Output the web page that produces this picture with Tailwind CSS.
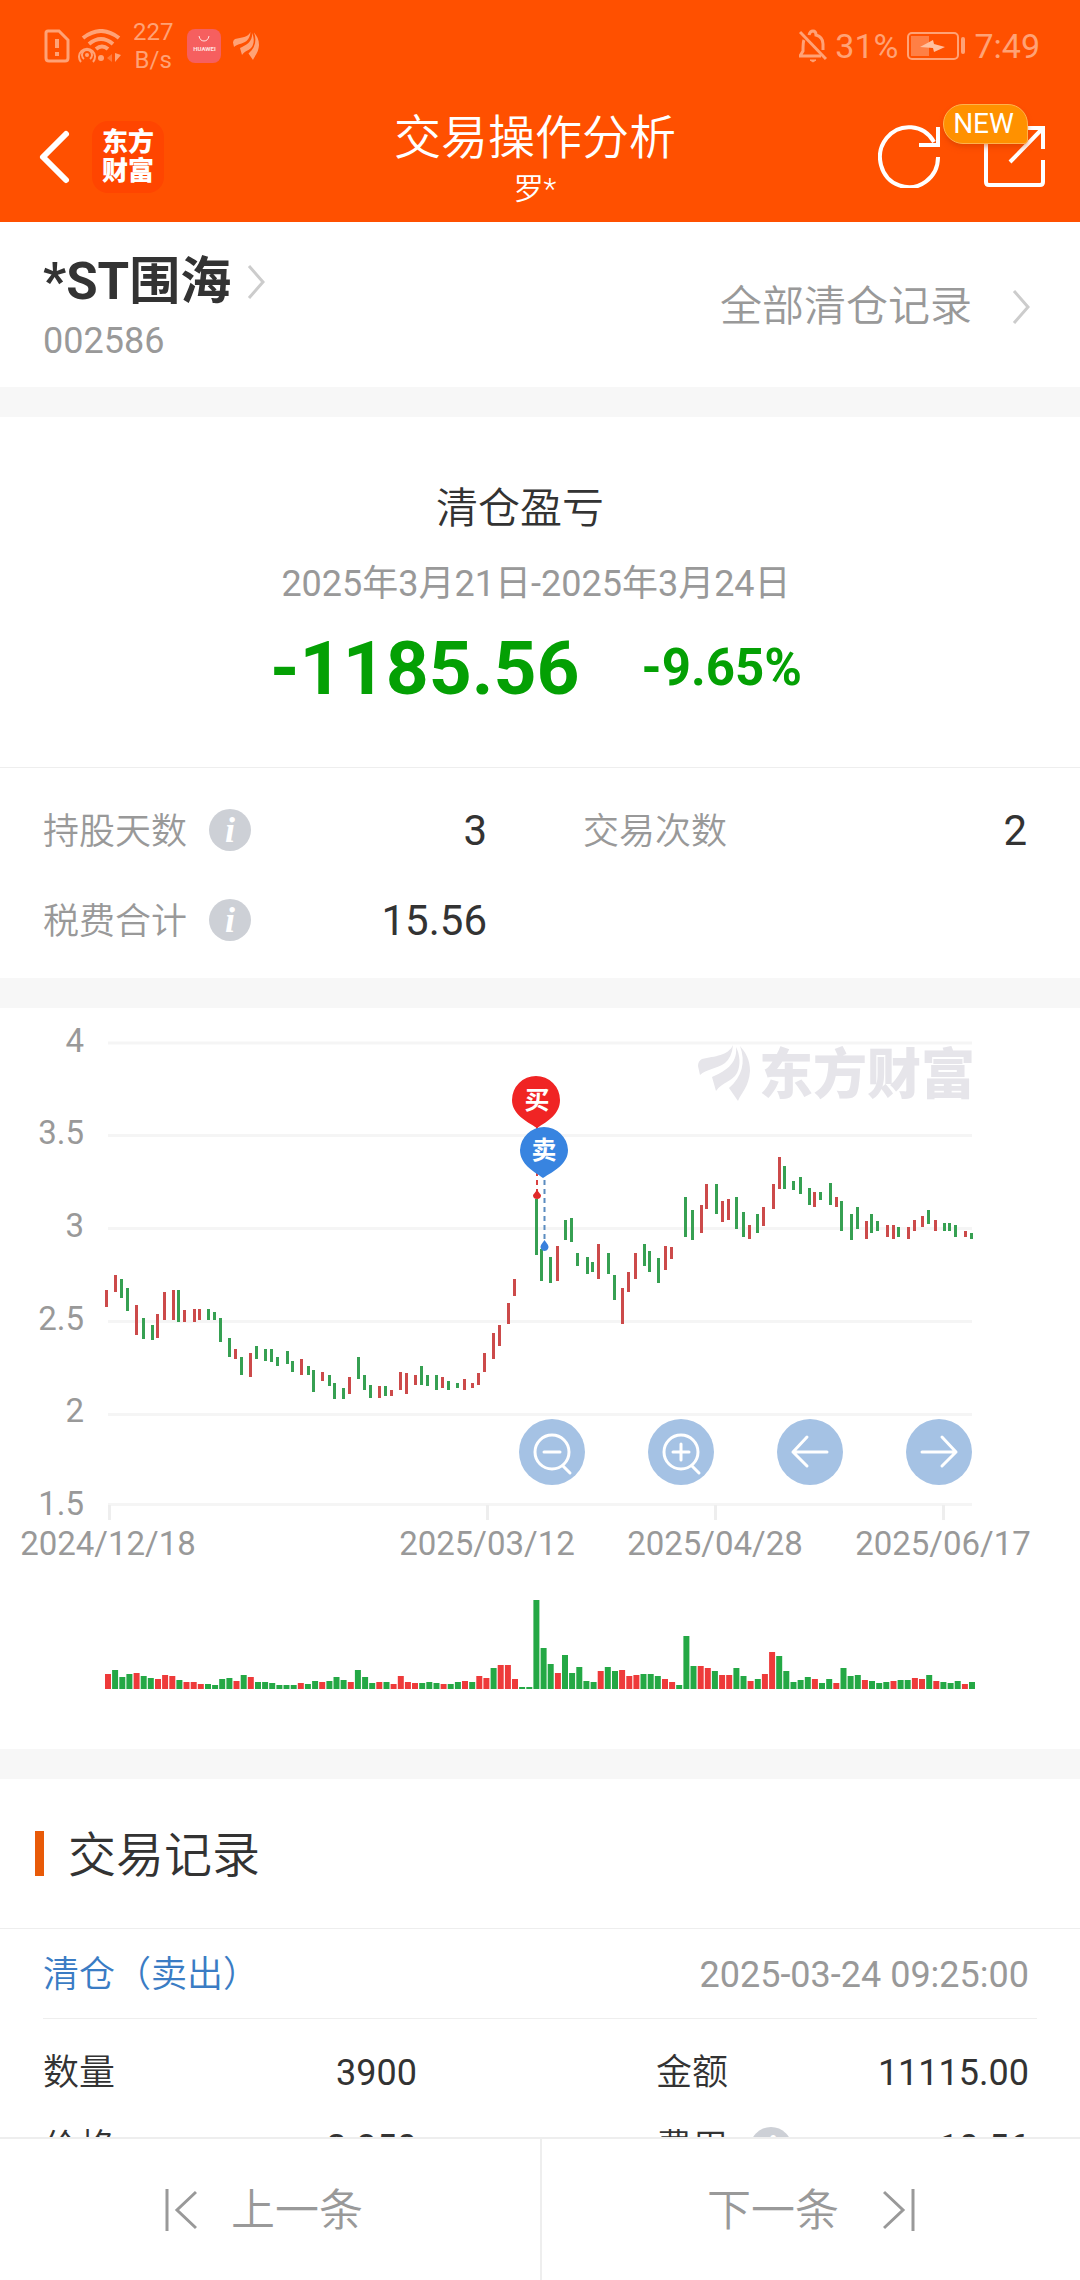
<!DOCTYPE html>
<html lang="zh-CN">
<head>
<meta charset="utf-8">
<meta name="viewport" content="width=device-width, initial-scale=1">
<title>交易操作分析</title>
<script src="https://cdn.jsdelivr.net/npm/@tailwindcss/browser@4"></script>
</head>
<body class="flex h-screen flex-col overflow-hidden bg-white font-[Roboto,'Noto_Sans_CJK_SC',sans-serif] text-[#333333]">

<svg class="hidden" aria-hidden="true">
  <symbol id="feather" viewBox="0 0 52 56">
    <path d="M35 0C30 11 17 11 4 14Q0 16 0 21L2 30C8 24 19 24 27 18Q34 12 35 0Z"/>
    <path d="M38 2C40 20 25 27 14 32L18 46C24 37 34 37 39 28C43 20 42 10 38 2Z"/>
    <path d="M42 1C48 17 44 32 31 43L40 56C43 48 51 42 52 26C52 15 48 8 42 1Z"/>
  </symbol>
  <symbol id="chevron" viewBox="0 0 18 34">
    <path d="M2 1L16 17L2 33" fill="none" stroke="currentColor" stroke-width="3"/>
  </symbol>
</svg>

<header class="shrink-0 bg-[#ff5000] text-white">
  <div class="flex h-[92px] items-center justify-between pr-10 pl-11 text-[34px] text-[#ffa276]">
    <div class="flex items-center">
      <svg class="mr-2 h-[34px] w-[26px]" viewBox="0 0 26 34" fill="none" stroke="currentColor" stroke-width="3">
        <path d="M4 2H15L24 11V29Q24 32 21 32H5Q2 32 2 29V4Q2 2 4 2Z"/>
        <path d="M13 10V19M13 23V27" stroke-width="4"/>
      </svg>
      <svg class="mr-3 h-[34px] w-[43px]" viewBox="0 0 43 34" fill="none" stroke="currentColor">
        <path d="M5 9Q23 -5 41 9M11 15Q23 5 35 15" stroke-width="4"/>
        <path d="M18 20Q24 15 30 20" stroke-width="4"/>
        <circle cx="23" cy="29" r="3" fill="currentColor" stroke="none"/>
        <circle cx="9" cy="26" r="2" fill="currentColor" stroke="none"/>
        <path d="M6 30A5 5 0 1 1 12 30M3 33A8 8 0 1 1 15 33" stroke-width="2"/>
        <path d="M34 25L29 29L34 33Z" fill="#ff7a3c" stroke="none"/>
        <path d="M37 24L43 26L37 33Z" fill="currentColor" stroke="none"/>
      </svg>
      <div class="mr-[14px] text-center text-[24px] leading-7">227<br>B/s</div>
      <div class="mr-3 flex h-[34px] w-[34px] flex-col items-center rounded-lg bg-[#f65f5f] text-[#ffe3e0]">
        <svg class="mt-[6px] h-[8px] w-[12px]" viewBox="0 0 12 8" fill="none" stroke="currentColor"><path d="M1 1Q2 6 6 6T11 1"/></svg>
        <span class="text-[6px] leading-3 font-bold">HUAWEI</span>
      </div>
      <svg class="h-7 w-[26px]" fill="currentColor"><use href="#feather"/></svg>
    </div>
    <div class="flex items-center">
      <svg class="mr-2 h-[34px] w-[28px]" viewBox="0 0 28 34" fill="none" stroke="currentColor" stroke-width="3">
        <path d="M1 3L27 30"/>
        <path d="M10 6Q11 2 14 2T17 6Q24 8 24 15V21M5 11Q4 13 4 22L1 27H22"/>
        <path d="M11 31H17L14 33Z" stroke-width="1" fill="currentColor"/>
      </svg>
      <span>31%</span>
      <svg class="mx-[9px] h-7 w-[58px]" viewBox="0 0 58 28" fill="none">
        <rect x="1" y="1" width="50" height="26" rx="4" stroke="currentColor" stroke-width="2"/>
        <rect x="4" y="4" width="18" height="20" fill="#ff7f45"/>
        <path d="M13 15L26 8L27 12L38 15L27 20L26 16Z" fill="#ffc0a0"/>
        <rect x="54" y="5" width="4" height="17" rx="2" fill="currentColor"/>
      </svg>
      <span>7:49</span>
    </div>
  </div>

  <div class="grid h-[130px] grid-cols-[1fr_auto_1fr] items-center pr-[34px] pl-6">
    <div class="flex items-center gap-5 pl-1">
      <button type="button" aria-label="返回">
        <svg class="h-14 w-11" viewBox="0 0 44 56" fill="none" stroke="#fff" stroke-width="6" stroke-linecap="round" stroke-linejoin="round"><path d="M38 5L15 28L38 51"/></svg>
      </button>
      <a href="#" class="flex h-[72px] w-[72px] items-center justify-center rounded-2xl bg-[#ff4500] text-[26px] leading-[29px] font-black">东方<br>财富</a>
    </div>
    <div class="text-center">
      <h1 class="text-[47px] leading-[64px] font-[350]">交易操作分析</h1>
      <p class="text-[30px] leading-[38px] font-[350]">罗*</p>
    </div>
    <div class="flex items-center justify-end gap-10 pb-[2px]">
      <button type="button" aria-label="刷新">
        <svg class="h-16 w-16" viewBox="0 0 64 64" fill="none" stroke="#fff" stroke-width="4"><path d="M60 33A29 30 0 1 1 56 18"/><path d="M60 3V21H41"/></svg>
      </button>
      <button type="button" aria-label="分享" class="relative">
        <svg class="h-16 w-16" viewBox="0 0 64 64" fill="none" stroke="#fff" stroke-width="4"><path d="M4 14V58Q4 61 7 61H58Q61 61 61 58V36"/><path d="M40 4H61V25M61 4L28 38"/></svg>
        <span class="absolute -top-5 right-[18px] flex h-10 w-[85px] items-center justify-center rounded-[20px] rounded-br-sm border border-[#ffb24d] bg-[#ff9100] pr-1 text-[28px] shadow-md shadow-[#c83c00]/40">NEW</span>
      </button>
    </div>
  </div>
</header>

<main class="min-h-0 flex-1 overflow-y-auto [scrollbar-width:none]">
  <section class="flex h-[165px] items-center justify-between pt-[4px] pr-[50px] pl-[43px]">
    <div>
      <a href="#" class="flex items-center gap-4 text-[51px] leading-[68px] font-bold">*ST围海
        <svg class="h-[34px] w-[18px] text-[#cccccc]"><use href="#chevron"/></svg>
      </a>
      <p class="text-[36px] leading-[50px] text-[#999999]">002586</p>
    </div>
    <a href="#" class="flex items-center gap-10 text-[42px] font-[350] text-[#999999]">全部清仓记录
      <svg class="h-[34px] w-[18px] text-[#cccccc]"><use href="#chevron"/></svg>
    </a>
  </section>

  <section class="border-t-[30px] border-[#f7f7f7] pt-[62px] pr-2 pb-[54px] text-center">
    <h2 class="pr-8 text-[42px] leading-[60px] font-[350]">清仓盈亏</h2>
    <p class="mt-5 text-[36px] leading-[50px] text-[#999999]">2025年3月21日-2025年3月24日</p>
    <div class="mt-[14px] flex items-center justify-center gap-[62px] font-bold text-[#04a004]">
      <span class="text-[75px] leading-[90px]">-1185.56</span>
      <span class="text-[51px] leading-[90px]">-9.65%</span>
    </div>
  </section>

  <dl class="grid grid-cols-2 border-t border-[#eeeeee] pt-[17px] pb-[13px] text-[36px]">
    <div class="flex h-[90px] items-center justify-between pr-[53px] pl-[43px]">
      <dt class="flex items-center gap-[22px] font-[350] text-[#999999]"><span class="pt-[3px]">持股天数</span>
        <button type="button" aria-label="持股天数说明" class="h-[42px] w-[42px] rounded-full bg-[#cdd0d6] font-['Liberation_Serif',serif] text-[36px] leading-[40px] font-bold text-white italic">i</button>
      </dt>
      <dd class="text-[42px]">3</dd>
    </div>
    <div class="flex h-[90px] items-center justify-between pr-[53px] pl-[43px]">
      <dt class="pt-[3px] font-[350] text-[#999999]">交易次数</dt>
      <dd class="text-[42px]">2</dd>
    </div>
    <div class="flex h-[90px] items-center justify-between pr-[53px] pl-[43px]">
      <dt class="flex items-center gap-[22px] font-[350] text-[#999999]"><span class="pt-[3px]">税费合计</span>
        <button type="button" aria-label="税费合计说明" class="h-[42px] w-[42px] rounded-full bg-[#cdd0d6] font-['Liberation_Serif',serif] text-[36px] leading-[40px] font-bold text-white italic">i</button>
      </dt>
      <dd class="text-[42px]">15.56</dd>
    </div>
  </dl>

  <section class="border-t-[30px] border-[#f7f7f7]">
    <div class="relative">
      <svg class="block w-full" viewBox="0 0 1080 741" role="img" aria-label="股价与成交量走势">
        <g id="grid" stroke="#f5f5f5" stroke-width="3">
          <path d="M108 35H972M108 127.500H972M108 220.500H972M108 313.500H972M108 406.500H972M108 496.500H972"/>
          <path stroke="#eeeeee" d="M109.500 497V512M487.500 497V512M715.500 497V512M943.500 497V512"/>
        </g>
        <g fill="#999999" font-size="33" text-anchor="end">
          <text x="84" y="44">4</text><text x="84" y="136">3.5</text><text x="84" y="229">3</text>
          <text x="84" y="322">2.5</text><text x="84" y="414">2</text><text x="84" y="507">1.5</text>
        </g>
        <g fill="#999999" font-size="33" text-anchor="middle">
          <text x="108" y="547">2024/12/18</text><text x="487" y="547">2025/03/12</text>
          <text x="715" y="547">2025/04/28</text><text x="943" y="547">2025/06/17</text>
        </g>
        <g fill="#e6e5ea">
          <use href="#feather" x="698" y="37" width="52" height="56"/>
          <text x="759" y="86" font-size="54" font-weight="900">东方财富</text>
        </g>
        <g id="candles"></g>
        <g id="volumes"></g>
        <g stroke-width="2" stroke-dasharray="5 4">
          <path d="M537 118V187" stroke="#d94040"/>
          <path d="M544.500 172V238" stroke="#5b8cc0"/>
        </g>
        <path d="M537 182L541 187A4 4 0 1 1 533 187Z" fill="#e02a2a"/>
        <path d="M544.500 232L548 237A4 4 0 1 1 541 237Z" fill="#3a80dc"/>
        <path d="M536 68A24 24 0 0 1 560 92C560 106 548 113 537 120C526 113 512 106 512 92A24 24 0 0 1 536 68Z" fill="#f02424"/>
        <path d="M544 119A24 24 0 0 1 568 142C568 156 554 163 543 170C533 163 520 156 520 142A24 24 0 0 1 544 119Z" fill="#3884e0"/>
        <g fill="#fff" font-size="25" font-weight="700" text-anchor="middle">
          <text x="537" y="101">买</text><text x="544" y="151">卖</text>
        </g>
      </svg>
      <div class="absolute top-[411px] right-[10%] flex gap-[63px]">
        <button type="button" aria-label="缩小" class="h-[66px] w-[66px] rounded-full bg-[#a5c2e4]">
          <svg viewBox="0 0 66 66" fill="none" stroke="#fff" stroke-width="3" stroke-linecap="round"><circle cx="33" cy="33" r="17"/><path d="M25 33H41M44 47L51 54"/></svg>
        </button>
        <button type="button" aria-label="放大" class="h-[66px] w-[66px] rounded-full bg-[#a5c2e4]">
          <svg viewBox="0 0 66 66" fill="none" stroke="#fff" stroke-width="3" stroke-linecap="round"><circle cx="33" cy="33" r="17"/><path d="M25 33H41M33 25V41M44 47L51 54"/></svg>
        </button>
        <button type="button" aria-label="左移" class="h-[66px] w-[66px] rounded-full bg-[#a5c2e4]">
          <svg viewBox="0 0 66 66" fill="none" stroke="#fff" stroke-width="3" stroke-linecap="round" stroke-linejoin="round"><path d="M50 33H16M30 18L16 33L30 47"/></svg>
        </button>
        <button type="button" aria-label="右移" class="h-[66px] w-[66px] rounded-full bg-[#a5c2e4]">
          <svg viewBox="0 0 66 66" fill="none" stroke="#fff" stroke-width="3" stroke-linecap="round" stroke-linejoin="round"><path d="M16 33H50M36 18L50 33L36 47"/></svg>
        </button>
      </div>
    </div>
  </section>

  <section class="border-t-[30px] border-[#f7f7f7]">
    <h2 class="flex h-[149px] items-center gap-6 pl-[35px] text-[48px] font-[350]">
      <span class="h-[45px] w-[9px] bg-[#e85a08]"></span><span class="pt-[5px]">交易记录</span>
    </h2>
    <article class="border-t border-[#eeeeee] px-[43px] text-[36px]">
      <div class="flex h-[89px] items-center justify-between pt-[3px] pr-2">
        <h3 class="font-[350] text-[#3a7cc4]">清仓（卖出）</h3>
        <time class="text-[#999999]">2025-03-24 09:25:00</time>
      </div>
      <dl class="grid grid-cols-[374px_1fr] gap-x-[239px] border-t border-[#eeeeee] pt-[16px] pr-2 pb-40">
        <div class="flex h-[75px] items-center justify-between"><dt class="font-[350]">数量</dt><dd>3900</dd></div>
        <div class="flex h-[75px] items-center justify-between"><dt class="font-[350]">金额</dt><dd>11115.00</dd></div>
        <div class="flex h-[75px] items-center justify-between"><dt class="font-[350]">价格</dt><dd>2.850</dd></div>
        <div class="flex h-[75px] items-center justify-between">
          <dt class="flex items-center gap-[22px] font-[350]">费用
            <button type="button" aria-label="费用说明" class="h-[42px] w-[42px] rounded-full bg-[#cdd0d6] font-['Liberation_Serif',serif] text-[36px] leading-[40px] font-bold text-white italic">i</button>
          </dt>
          <dd>10.56</dd>
        </div>
      </dl>
    </article>
  </section>
</main>

<nav class="grid h-[143px] shrink-0 grid-cols-2 border-t-2 border-[#eeeeee] bg-white text-[44px] font-[350] text-[#999999]">
  <button type="button" class="flex items-center justify-center gap-[34px] pr-3">
    <svg class="h-[42px] w-8" viewBox="0 0 32 42" fill="none" stroke="currentColor" stroke-width="3"><path d="M2 0V42M31 3L12 21L31 39"/></svg><span class="pt-[3px]">上一条</span>
  </button>
  <button type="button" class="flex items-center justify-center gap-11 border-l-2 border-[#eeeeee]"><span class="pt-[3px]">下一条</span>
    <svg class="h-[42px] w-8" viewBox="0 0 32 42" fill="none" stroke="currentColor" stroke-width="3"><path d="M30 0V42M1 3L20 21L1 39"/></svg>
  </button>
</nav>

<script>
  // Each candle: x, top, bottom, direction (r = up, g = down).
  const candles = `106 282 299 r,115 267 284 r,121 271 290 g,127 280 303 g,136 297 327 r,143 310 331 g,152 317 332 g,157 306 330 r,164 284 312 r,173 282 312 r,178 282 314 g,184 302 314 r,194 301 314 r,199 301 312 r,208 301 312 g,214 304 312 g,220 310 334 g,229 330 349 g,235 341 351 r,241 349 367 g,250 345 369 r,256 338 351 g,265 341 353 g,271 341 354 g,277 349 358 g,287 343 356 g,292 353 364 g,301 351 367 r,308 358 367 g,313 362 384 g,322 364 373 r,329 367 378 g,334 375 391 g,343 380 391 g,349 369 386 r,358 349 371 g,364 367 382 g,370 377 390 g,379 378 390 r,385 378 388 g,391 382 388 r,400 364 382 r,406 365 386 r,415 367 377 r,421 358 377 g,427 367 378 g,436 367 382 g,442 369 380 r,448 373 382 g,457 375 380 g,464 371 382 r,472 375 380 r,478 365 377 r,484 345 364 r,493 325 351 r,499 317 338 r,508 295 316 r,514 271 288 r,536 191 247 g,541 241 273 g,550 249 275 g,557 238 273 r,565 212 232 g,571 210 234 g,577 245 258 g,587 249 266 g,592 254 264 g,598 236 271 r,608 245 266 g,614 267 292 g,622 280 316 r,628 264 284 r,635 245 271 r,644 236 258 g,649 243 264 g,658 250 275 g,665 238 262 r,671 239 251 r,685 189 229 g,692 202 232 g,701 197 225 r,706 176 201 r,716 176 206 g,722 193 214 r,728 191 212 r,736 189 221 g,743 204 229 g,749 217 231 r,757 206 225 g,763 199 218 r,773 176 201 r,779 149 181 r,784 158 181 g,793 173 182 g,800 169 186 g,809 180 197 g,814 184 199 r,820 184 192 g,830 175 197 g,836 189 199 r,841 193 223 g,851 206 232 g,857 199 221 g,866 213 231 r,871 206 225 g,877 213 223 g,887 217 229 r,893 217 231 r,898 219 229 g,908 219 231 r,914 212 223 r,922 208 219 r,928 202 216 g,935 212 223 r,944 215 223 g,949 215 223 g,955 217 229 g,965 223 229 r,971 225 231 g`;
  document.getElementById('candles').innerHTML = candles.split(',').map(c => {
    const [x, top, bottom, dir] = c.split(' ');
    return `<rect x="${x - 1}" y="${top}" width="3" height="${bottom - top}" fill="${dir === 'r' ? '#cc4a4a' : '#36a052'}"/>`;
  }).join('');

  // Volume bars share a baseline; the number is the bar height.
  const volumes = '15r 19g 12g 15g 16r 13g 11g 10r 14r 13r 9g 7r 7r 5r 5g 4g 10g 11g 8r 14g 12r 7g 7g 6g 4g 4g 4g 6r 5g 8g 7r 8g 12g 9g 7r 19g 12g 6g 7r 7g 5r 13r 7r 6r 6g 7g 6g 5r 5g 7g 8r 7g 13r 11r 21g 24r 24r 10r 2g 2g 89g 41g 25g 16r 34g 16g 22g 8g 7g 18r 22g 18g 19r 13r 14r 15g 15g 13g 10r 7r 4g 53g 23g 23r 21r 18g 14r 14r 21g 13g 8r 10g 15r 37r 33g 18g 7g 9g 12g 10r 6g 10g 6r 21g 13g 14g 9r 8g 6g 7g 8r 9g 9g 11r 10r 14g 8r 7g 6g 8g 5r 7g'.split(' ');
  const step = 864 / (volumes.length - 1);
  document.getElementById('volumes').innerHTML = volumes.map((v, i) => {
    const h = parseInt(v, 10);
    return `<rect x="${(105 + i * step).toFixed(1)}" y="${681 - h}" width="6" height="${h}" fill="${v.endsWith('r') ? '#ee3a3a' : '#24a845'}"/>`;
  }).join('');
</script>
</body>
</html>
